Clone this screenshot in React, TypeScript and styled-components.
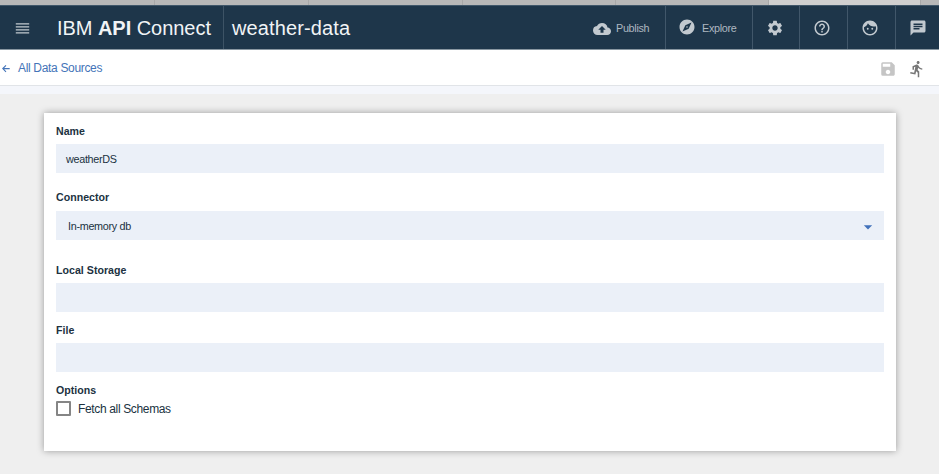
import React from 'react';
import styled, { createGlobalStyle } from 'styled-components';
import {
  MdArrowDropDown,
  MdBackup,
  MdChat,
  MdDirectionsRun,
  MdExplore,
  MdFace,
  MdHelpOutline,
  MdSave,
  MdSettings,
} from 'react-icons/md';

const GlobalStyle = createGlobalStyle`
  * { box-sizing: border-box; }
  body {
    margin: 0;
    background: #efefef;
    color: #20323f;
    font-family: "Liberation Sans", Arial, sans-serif;
    overflow: hidden;
  }
  svg { display: block; flex: none; }
`;

const Page = styled.div`
  display: flex;
  flex-direction: column;
  height: 474px;
  background: #efefef;
`;

const TabStrip = styled.div`
  display: flex;
  flex: none;
  height: 5px;
  background: #b8b8b8;
`;

const BrowserTab = styled.div<{ $width: number; $active?: boolean }>`
  flex: none;
  width: ${(p) => p.$width}px;
  border-right: 1px solid #a8a8a8;
  background: ${(p) => (p.$active ? '#d0d0d0' : 'transparent')};
`;

const Header = styled.header`
  display: flex;
  flex: none;
  height: 45px;
  background: #1e364a;
  border-top: 1px solid #40576a;
  border-bottom: 1px solid #8997a1;
  color: #f1f4f6;
`;

const MenuButton = styled.div`
  display: flex;
  align-items: center;
  width: 57px;
  padding: 2px 0 0 15px;
`;

const Brand = styled.div`
  width: 167px;
  border-right: 1px solid #3d5365;
  font-size: 20px;
  line-height: 44px;
  letter-spacing: -0.04px;
  white-space: nowrap;
`;

const ProjectName = styled.div`
  flex: 1;
  padding-left: 8px;
  font-size: 20px;
  line-height: 44px;
  letter-spacing: 0.12px;
`;

const HeaderAction = styled.div<{ $width: number; $gap?: number; $start?: number; $last?: boolean }>`
  display: flex;
  align-items: center;
  gap: ${(p) => p.$gap ?? 0}px;
  width: ${(p) => p.$width}px;
  padding: 1px 0 0 ${(p) => p.$start ?? 13}px;
  border-right: ${(p) => (p.$last ? 'none' : '1px solid #41576a')};
  color: #c2c9cf;
`;

const CloudIcon = styled(MdBackup)`
  margin-top: 2px;
`;

const CompassIcon = styled(MdExplore)`
  margin-bottom: 2px;
`;

const ActionLabel = styled.span`
  color: #aeb8c1;
  font-size: 10.8px;
  line-height: 14px;
  letter-spacing: -0.3px;
`;

const Toolbar = styled.div`
  display: flex;
  flex: none;
  align-items: center;
  height: 36px;
  padding: 0 13px 0 2px;
  background: #fff;
  border-bottom: 1px solid #e1e4e8;
`;

const BackLink = styled.a`
  display: flex;
  flex: 1;
  align-items: center;
  gap: 8px;
  color: #4474b8;
  font-size: 12px;
  line-height: 16px;
  letter-spacing: -0.33px;
`;

const ToolbarIcons = styled.div`
  display: flex;
  gap: 11px;
  padding-top: 2px;
`;

const SubStrip = styled.div`
  flex: none;
  height: 8px;
  background: #f4f6fb;
`;

const Card = styled.main`
  width: 852px;
  height: 338px;
  margin: 19px 0 0 44px;
  padding: 11px 12px 0;
  background: #fff;
  box-shadow: 0 0 7px rgba(0, 0, 0, 0.36);
`;

const Field = styled.section<{ $space: number }>`
  margin-bottom: ${(p) => p.$space}px;
`;

const Label = styled.div<{ $gap: number }>`
  height: 14px;
  margin-bottom: ${(p) => p.$gap}px;
  font-size: 10.6px;
  font-weight: 700;
  line-height: 14px;
  letter-spacing: 0.03px;
`;

const Control = styled.div<{ $inset?: number }>`
  display: flex;
  align-items: center;
  justify-content: space-between;
  height: 29px;
  padding: 1px 6px 0 ${(p) => p.$inset ?? 10}px;
  background: #ebf0f8;
  font-size: 10.8px;
  line-height: 14px;
  letter-spacing: -0.3px;
`;

const Caret = styled(MdArrowDropDown)`
  margin-top: 2px;
`;

const CheckRow = styled.div`
  display: flex;
  align-items: center;
  gap: 7px;
  height: 15px;
`;

const CheckLabel = styled.span`
  padding-top: 2px;
  font-size: 12px;
  line-height: 15px;
  letter-spacing: -0.35px;
`;

const Checkbox = styled.span`
  width: 15px;
  height: 15px;
  border: 2px solid #858585;
  border-radius: 1px;
  background: #fff;
`;

const MenuIcon = () => (
  <svg width="15" height="11" viewBox="0 0 15 11" stroke="#c2cad0" strokeWidth="1.2">
    <path d="M.8 .9h13.4M.8 3.9h13.4M.8 6.9h13.4M.8 9.9h13.4" />
  </svg>
);

const BackArrow = () => (
  <svg width="8" height="10" viewBox="0 0 8 10" fill="none" stroke="#4474b8" strokeWidth="1.1">
    <path d="M7.7 5.6H.8M4 2.4L.8 5.6L4 8.8" />
  </svg>
);

const tabs = [155, 154, 154, 153, 153];

export default function App() {
  return (
    <Page>
      <GlobalStyle />
      <TabStrip>
        {tabs.map((width, i) => (
          <BrowserTab key={i} $width={width} />
        ))}
        <BrowserTab $width={152} $active />
      </TabStrip>
      <Header>
        <MenuButton><MenuIcon /></MenuButton>
        <Brand>IBM <b>API</b> Connect</Brand>
        <ProjectName>weather-data</ProjectName>
        <HeaderAction $width={88} $gap={5} $start={15}>
          <CloudIcon size={18} />
          <ActionLabel>Publish</ActionLabel>
        </HeaderAction>
        <HeaderAction $width={87} $gap={6} $start={12}>
          <CompassIcon size={18} />
          <ActionLabel>Explore</ActionLabel>
        </HeaderAction>
        <HeaderAction $width={47}><MdSettings size={18} /></HeaderAction>
        <HeaderAction $width={48}><MdHelpOutline size={18} /></HeaderAction>
        <HeaderAction $width={48}><MdFace size={18} /></HeaderAction>
        <HeaderAction $width={43} $last><MdChat size={18} /></HeaderAction>
      </Header>
      <Toolbar>
        <BackLink><BackArrow />All Data Sources</BackLink>
        <ToolbarIcons>
          <MdSave size={18} color="#c5c5c5" />
          <MdDirectionsRun size={18} color="#777" />
        </ToolbarIcons>
      </Toolbar>
      <SubStrip />
      <Card>
        <Field $space={17}>
          <Label $gap={6}>Name</Label>
          <Control>weatherDS</Control>
        </Field>
        <Field $space={23}>
          <Label $gap={7}>Connector</Label>
          <Control $inset={12}>
            In-memory db
            <Caret size={20} color="#4272bb" />
          </Control>
        </Field>
        <Field $space={11}>
          <Label $gap={6}>Local Storage</Label>
          <Control />
        </Field>
        <Field $space={11}>
          <Label $gap={6}>File</Label>
          <Control />
        </Field>
        <Label $gap={4}>Options</Label>
        <CheckRow>
          <Checkbox />
          <CheckLabel>Fetch all Schemas</CheckLabel>
        </CheckRow>
      </Card>
    </Page>
  );
}
